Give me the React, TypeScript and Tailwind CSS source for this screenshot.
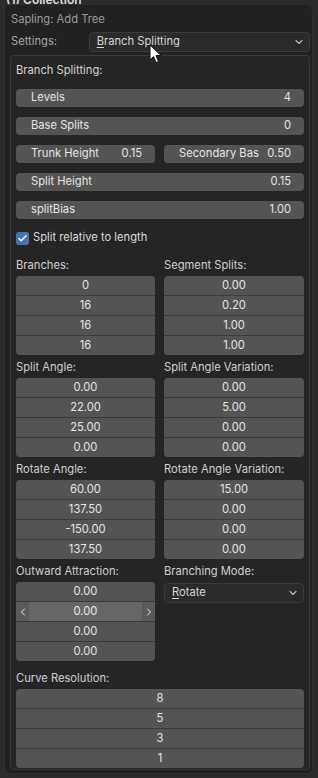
import { ChevronDown, ChevronLeft, ChevronRight, Check } from 'lucide-react'

const font = { fontFamily: 'Inter, "DejaVu Sans", sans-serif' }

function Field({ label, value }: { label: string; value: string }) {
  return (
    <div className="flex h-[18px] items-center justify-between rounded-[4px] bg-[#545454] pl-[15px] pr-[13px] text-[#e4e4e4]">
      <span>{label}</span>
      <span>{value}</span>
    </div>
  )
}

function Stack({ values, hover }: { values: string[]; hover?: number }) {
  return (
    <div className="flex flex-col gap-px overflow-hidden rounded-[4px] bg-[#3a3a3a]">
      {values.map((v, i) =>
        i === hover ? (
          <div key={i} className="flex h-[19px] items-center bg-[#666666] text-[#ececec]">
            <div className="flex h-full w-[13px] items-center justify-center bg-[#5a5a5a]">
              <ChevronLeft className="h-3 w-3" strokeWidth={2} />
            </div>
            <div className="flex-1 text-center">{v}</div>
            <div className="flex h-full w-[13px] items-center justify-center bg-[#5a5a5a]">
              <ChevronRight className="h-3 w-3" strokeWidth={2} />
            </div>
          </div>
        ) : (
          <div key={i} className="flex h-[19px] items-center justify-center bg-[#545454] text-[#e4e4e4]">
            {v}
          </div>
        )
      )}
    </div>
  )
}

function Label({ children }: { children: string }) {
  return <div className="flex h-[20px] items-center text-[#cfcfcf]">{children}</div>
}

function Pair({
  left,
  right,
  className,
}: {
  left: React.ReactNode
  right: React.ReactNode
  className?: string
}) {
  return (
    <div className={'grid grid-cols-[139px_140px] gap-x-[9px] ' + (className ?? '')}>
      <div>{left}</div>
      <div>{right}</div>
    </div>
  )
}

function Dropdown({ text, className }: { text: string; className?: string }) {
  return (
    <div
      className={
        'flex h-[20px] items-center justify-between rounded-[4px] border border-[#3b3b3b] bg-[#2a2a2a] pl-[7px] pr-[4px] text-[#d6d6d6] ' +
        (className ?? '')
      }
    >
      <span>
        <span className="underline underline-offset-2">{text[0]}</span>
        {text.slice(1)}
      </span>
      <ChevronDown className="h-3 w-3 text-[#bbbbbb]" strokeWidth={2.2} />
    </div>
  )
}

export default function App() {
  return (
    <div
      className="relative h-[778px] w-[318px] overflow-hidden bg-[#2b2b2b] text-[11.2px] leading-none"
      style={font}
    >
      <div className="absolute left-[6px] top-[-6px] text-[12px] font-semibold text-[#dddddd]">(1) Collection</div>

      <div className="relative ml-[4px] mt-[4px] h-[770px] w-[309px] rounded-[6px] border border-[#2f2f2f] bg-[#212121] pl-[5px] pr-[2px]">
        <div className="mt-[5px] flex h-[20px] items-center pl-[1px] text-[#9c9c9c]">Sapling: Add Tree</div>
        <div className="mt-[2px] flex h-[20px] items-center">
          <span className="w-[80px] pl-[1px] text-[#a6a6a6]">Settings:</span>
          <Dropdown text="Branch Splitting" className="w-[225px]" />
        </div>

        <div className="mt-[3px] h-[715px] w-[300px] rounded-[4px] border border-[#393939] bg-[#252525] px-[5px]">
          <div className="flex h-[28px] items-center pt-[2px] text-[#d4d4d4]">Branch Splitting:</div>
          <div className="mt-[5px] flex flex-col gap-[10px]">
            <Field label="Levels" value="4" />
            <Field label="Base Splits" value="0" />
            <Pair left={<Field label="Trunk Height" value="0.15" />} right={<Field label="Secondary Bas" value="0.50" />} />
            <Field label="Split Height" value="0.15" />
            <Field label="splitBias" value="1.00" />
          </div>

          <div className="mt-[11px] flex h-[16px] items-center gap-[4px] text-[#dadada]">
            <div className="flex h-[13px] w-[13px] items-center justify-center rounded-[3px] bg-[#4772b3]">
              <Check className="h-[11px] w-[11px] text-white" strokeWidth={3} />
            </div>
            <span>Split relative to length</span>
          </div>

          <Pair
            className="mt-[10px]"
            left={
              <>
                <Label>Branches:</Label>
                <Stack values={['0', '16', '16', '16']} />
              </>
            }
            right={
              <>
                <Label>Segment Splits:</Label>
                <Stack values={['0.00', '0.20', '1.00', '1.00']} />
              </>
            }
          />
          <Pair
            className="mt-[3px]"
            left={
              <>
                <Label>Split Angle:</Label>
                <Stack values={['0.00', '22.00', '25.00', '0.00']} />
              </>
            }
            right={
              <>
                <Label>Split Angle Variation:</Label>
                <Stack values={['0.00', '5.00', '0.00', '0.00']} />
              </>
            }
          />
          <Pair
            className="mt-[3px]"
            left={
              <>
                <Label>Rotate Angle:</Label>
                <Stack values={['60.00', '137.50', '-150.00', '137.50']} />
              </>
            }
            right={
              <>
                <Label>Rotate Angle Variation:</Label>
                <Stack values={['15.00', '0.00', '0.00', '0.00']} />
              </>
            }
          />
          <Pair
            className="mt-[3px]"
            left={
              <>
                <Label>Outward Attraction:</Label>
                <Stack values={['0.00', '0.00', '0.00', '0.00']} hover={1} />
              </>
            }
            right={
              <>
                <Label>Branching Mode:</Label>
                <Dropdown text="Rotate" className="mt-[1px]" />
              </>
            }
          />

          <div className="mt-[8px]">
            <Label>Curve Resolution:</Label>
            <Stack values={['8', '5', '3', '1']} />
          </div>
        </div>

        <svg className="absolute left-[144px] top-[39px]" width="14" height="20" viewBox="0 0 14 20">
          <path d="M1 1 L1 16 L4.5 12.5 L7 18.5 L9.5 17.5 L7 11.5 L12 11.5 Z" fill="#ffffff" stroke="#111111" strokeWidth="1" strokeLinejoin="round" />
        </svg>
      </div>
    </div>
  )
}
